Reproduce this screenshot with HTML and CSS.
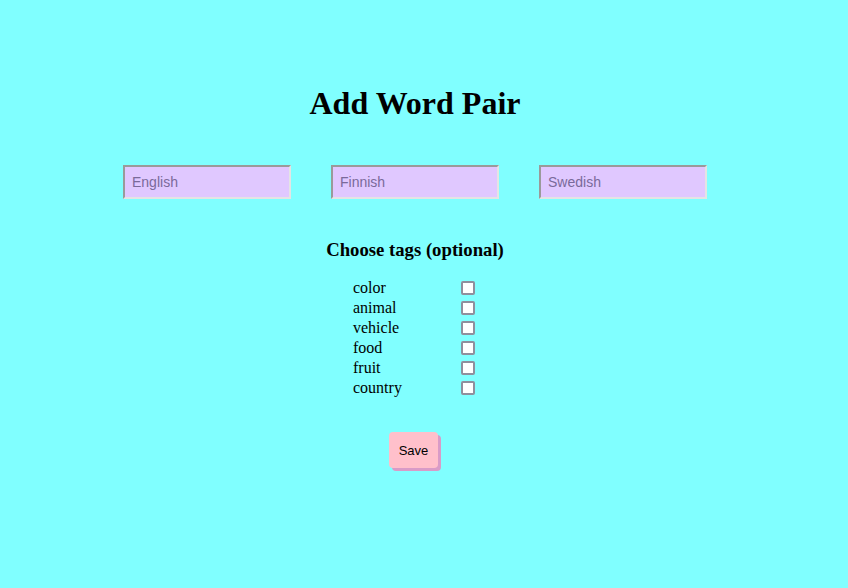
FILE: index.html
```html
<!DOCTYPE html>
<html>
<head>
<meta charset="utf-8">
<link rel="stylesheet" href="styles.css">
</head>
<body>
<div class="page">
  <h1 class="title">Add Word Pair</h1>
  <div class="inputs">
    <input class="word" type="text" placeholder="English">
    <input class="word" type="text" placeholder="Finnish">
    <input class="word" type="text" placeholder="Swedish">
  </div>
  <h3 class="tags-title">Choose tags (optional)</h3>
  <div class="tags">
    <label class="tag"><span>color</span><input class="box" type="checkbox"></label>
    <label class="tag"><span>animal</span><input class="box" type="checkbox"></label>
    <label class="tag"><span>vehicle</span><input class="box" type="checkbox"></label>
    <label class="tag"><span>food</span><input class="box" type="checkbox"></label>
    <label class="tag"><span>fruit</span><input class="box" type="checkbox"></label>
    <label class="tag"><span>country</span><input class="box" type="checkbox"></label>
  </div>
  <div class="actions">
    <button class="save">Save</button>
  </div>
</div>
</body>
</html>
```
FILE: styles.css
```css
html, body {
  margin: 0;
  padding: 0;
  background: #80ffff;
  font-family: "Liberation Serif", "Times New Roman", serif;
  color: #000;
}
.page {
  width: 830px;
  display: flex;
  flex-direction: column;
  align-items: center;
  padding-top: 85px;
  padding-bottom: 40px;
}
.title {
  font-size: 32px;
  font-weight: bold;
  margin: 0;
  line-height: 37px;
}
.inputs {
  display: flex;
  gap: 40px;
  margin-top: 43px;
}
.word {
  box-sizing: border-box;
  width: 168px;
  height: 34px;
  margin: 0;
  padding: 0 7px;
  background: #e0c8ff;
  border-style: solid;
  border-width: 2px;
  border-color: #9a9a9a #e4e4e4 #e4e4e4 #9a9a9a;
  font-family: "Liberation Sans", Arial, sans-serif;
  font-size: 14px;
  outline: none;
}
.word::placeholder {
  color: #7a6a9a;
}
.tags-title {
  font-size: 18.72px;
  font-weight: bold;
  margin: 40px 0 0 0;
  line-height: 22px;
}
.tags {
  display: flex;
  flex-direction: column;
  margin-top: 17px;
  width: 124px;
}
.tag {
  display: flex;
  align-items: center;
  justify-content: space-between;
  height: 20px;
  font-size: 16px;
}
.box {
  appearance: none;
  -webkit-appearance: none;
  box-sizing: border-box;
  margin: 0 2px 0 0;
  width: 14px;
  height: 14px;
  background: #fff;
  border: 2px solid #8f8f9d;
  border-radius: 2px;
}
.actions {
  margin-top: 34px;
  padding: 0 3px 3px 0;
}
.save {
  display: block;
  box-sizing: border-box;
  width: 49px;
  height: 36px;
  padding: 0;
  background: #ffc0cb;
  border: none;
  border-radius: 4px;
  box-shadow: 3px 3px 0 0 #d99bc7;
  font-family: "Liberation Sans", Arial, sans-serif;
  font-size: 13px;
  color: #000;
}
```
